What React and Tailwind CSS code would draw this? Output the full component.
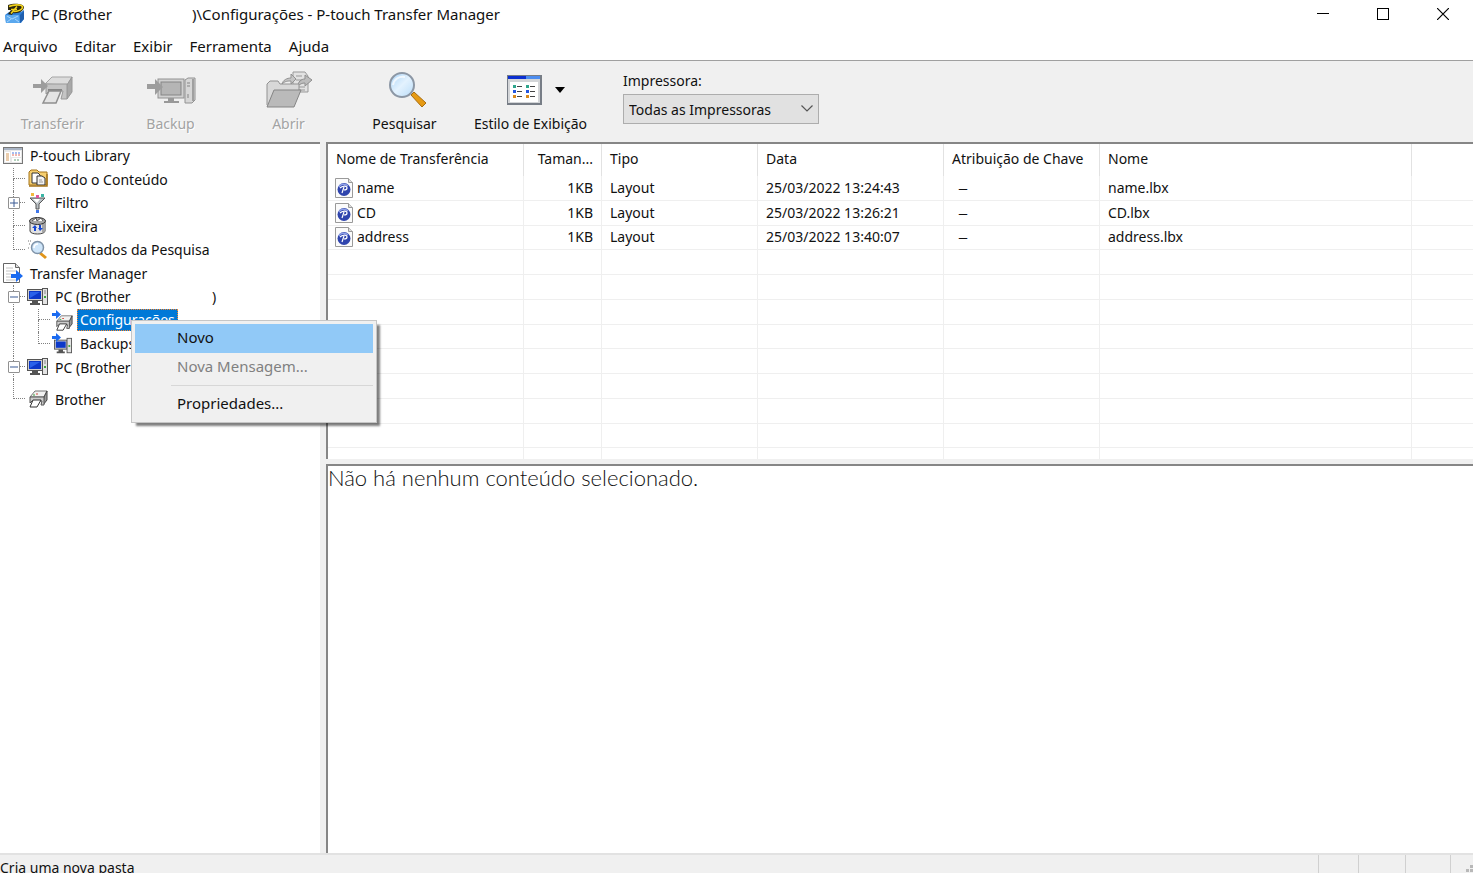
import React from 'react';

/* ---------- Icons ---------- */

function AppIcon() {
  return (
    <svg width="22" height="22" viewBox="0 0 22 22" aria-hidden="true">
      <path d="M1 12 5 9h12l3-2v9l-3 4H2z" fill="#2f7fd6" />
      <path d="M1 12h14l1 8H2z" fill="#5aa8ee" />
      <path d="m3 13 5 3 6-3M3 19l4-3M15 19l-4-3" stroke="#a8d4fb" fill="none" />
      <path d="M16 12l4-4v8l-4 4z" fill="#1f5fae" />
      <path d="M4 2C9 0 19 0 20 4c0 4-6 7-11 6l-1 2-4-1 3-4H4z" fill="#2b2710" />
      <path d="M5 3.500C9 1.500 18 1 18.500 4c0 3-5 4.500-9 4.500" fill="none" stroke="#f3d21b" strokeWidth="1.600" />
      <path d="m13 3.500-6 7M7 6.500h6" stroke="#f3d21b" strokeWidth="1.600" />
    </svg>
  );
}

function TransferIcon() {
  return (
    <svg width="42" height="32" viewBox="0 0 42 32" aria-hidden="true">
      <path d="M13 10 20 3h20l-5 8z" fill="#dcdcdc" stroke="#a5a5a5" />
      <path d="M35 11l5-8v15l-5 7z" fill="#a8a8a8" stroke="#989898" />
      <path d="M14 10h21v15h-6l2-8H17l-3 3z" fill="#c4c4c4" stroke="#999" />
      <path d="M16 16h14" stroke="#858585" strokeWidth="2" />
      <path d="M17 17h12l-5 12H11z" fill="#e4e4e4" stroke="#8f8f8f" strokeWidth="1.500" />
      <path d="M1 10h8V5l7 7-7 7v-5H1z" fill="#9d9d9d" />
    </svg>
  );
}

function BackupIcon() {
  return (
    <svg width="50" height="32" viewBox="0 0 50 32" aria-hidden="true">
      <rect x="12" y="5" width="26" height="19" fill="#d0d0d0" stroke="#929292" />
      <rect x="15" y="8" width="20" height="13" fill="#b5b5b5" stroke="#858585" />
      <path d="M22 24h6v3h5v2H18v-2h4z" fill="#999" />
      <path d="M39 6l3-2h7v22l-3 3h-7z" fill="#d6d6d6" stroke="#929292" />
      <path d="M47 5v22" stroke="#a0a0a0" strokeWidth="2" />
      <path d="M41 9h3M41 12h3M42 20v4" stroke="#858585" />
      <path d="M1 10h8V5l8 8-8 8v-6H1z" fill="#9d9d9d" />
    </svg>
  );
}

function OpenIcon() {
  return (
    <svg width="48" height="38" viewBox="0 0 48 38" aria-hidden="true">
      <path d="M28 1h12l3 4v16H28z" fill="#e2e2e2" stroke="#999" />
      <path d="M31 5h6M31 9h7M31 16h9M31 19h9" stroke="#999" />
      <path d="M40 4l7 5-7 6v-3c-3 0-5 1-7 3 0-4 3-7 7-7z" fill="#bcbcbc" stroke="#8f8f8f" />
      <path d="M2 34V13l3-3h8l2 3h19v7" fill="#d8d8d8" stroke="#929292" />
      <path d="M17 13c1-4 5-6 9-6V3l5 5-5 5v-3c-3 0-6 0-9 3z" fill="#c4c4c4" stroke="#929292" />
      <path d="M2 36 9 19h27l-7 17z" fill="#bababa" stroke="#858585" />
    </svg>
  );
}

function SearchIcon() {
  return (
    <svg width="40" height="38" viewBox="0 0 40 38" aria-hidden="true">
      <defs>
        <linearGradient id="lens" x1="0" y1="0" x2="1" y2="1">
          <stop offset="0" stopColor="#a9d3f7" />
          <stop offset=".5" stopColor="#e3f2fe" />
          <stop offset="1" stopColor="#b9dcf8" />
        </linearGradient>
      </defs>
      <path d="m26 21 12 11-4 4-11-12z" fill="#e69a13" stroke="#a86d10" />
      <circle cx="14" cy="14" r="12" fill="url(#lens)" stroke="#8c97a5" strokeWidth="2" />
      <path d="M5 14c1-6 6-9 12-8" stroke="#fff" strokeWidth="2" fill="none" opacity=".7" />
    </svg>
  );
}

function ViewStyleIcon() {
  const rows = [
    [13, '#2fa58c'],
    [18, '#2457e0'],
    [23, '#d98a1c'],
  ];
  return (
    <svg width="36" height="32" viewBox="0 0 36 32" aria-hidden="true">
      <rect x="0" y="1" width="35" height="30" fill="#777d86" />
      <rect x="1" y="2" width="32" height="27" fill="#d3d5d8" />
      <rect x="1" y="2" width="32" height="3" fill="#4c8df0" />
      <rect x="1" y="2" width="18" height="3" fill="#0b2fd0" />
      <rect x="3" y="8" width="28" height="20" fill="#fff" />
      {rows.map(([y, c]) => (
        <g key={y}>
          <rect x="6" y={y - 2} width="3" height="3" fill={c} />
          <rect x="10" y={y - 1} width="5" height="1" fill="#444" />
          <rect x="19" y={y - 2} width="3" height="3" fill={c} />
          <rect x="23" y={y - 1} width="5" height="1" fill="#444" />
        </g>
      ))}
    </svg>
  );
}

function LibraryIcon() {
  return (
    <svg width="20" height="18" viewBox="0 0 20 18" aria-hidden="true">
      <rect x=".5" y=".5" width="19" height="16" fill="#e8e8e8" stroke="#777" />
      <rect x="1" y="1" width="18" height="2" fill="#a9b4c4" />
      <rect x="2" y="5" width="5" height="10" fill="#fff" />
      <path d="M3 7h3M3 9h3M3 11h3M3 13h3" stroke="#d59a5a" />
      <rect x="8" y="4" width="10" height="6" fill="#fff" />
      <path d="M9 6h2M12 6h2M15 6h2" stroke="#4a78dd" />
      <path d="M9 8h2M12 8h2M15 8h2" stroke="#e06d5f" />
      <rect x="9" y="11" width="9" height="4" fill="#fff" />
      <path d="M11 13h6" stroke="#69a37b" strokeDasharray="2 1" />
    </svg>
  );
}

function ContentIcon() {
  return (
    <svg width="20" height="20" viewBox="0 0 20 20" aria-hidden="true">
      <path d="M1 16V3l2-2h6l2 2h8v13z" fill="#f6cf70" stroke="#a5741a" />
      <path d="M4 4h6l2 2v8H4z" fill="#fff" stroke="#333" />
      <path d="M9 7h5l3 2v7H9z" fill="#f3f3f3" stroke="#333" />
      <path d="M11 11h3M11 13h4" stroke="#999" />
      <path d="M1 17h18V5" fill="none" stroke="#a5741a" strokeWidth="1.500" />
    </svg>
  );
}

function FilterIcon() {
  return (
    <svg width="20" height="20" viewBox="0 0 20 20" aria-hidden="true">
      <path d="M2 5h15l-6 6v5H8v-5z" fill="#b9c0c5" stroke="#555" />
      <path d="M5 6h7l-3 4z" fill="#fff" />
      <rect x="3" y="0" width="3" height="3" fill="#f3b93e" />
      <rect x="8" y="2" width="3" height="3" fill="#e0559a" />
      <rect x="13" y="1" width="3" height="3" fill="#39b5a5" />
      <rect x="8" y="17" width="3" height="3" fill="#3e76ea" />
    </svg>
  );
}

function TrashIcon() {
  return (
    <svg width="20" height="20" viewBox="0 0 20 20" aria-hidden="true">
      <path d="M2 6v9c0 4 15 4 15 0V6z" fill="#e2e2e2" stroke="#444" />
      <path d="M14 7v10c2-1 3-1 3-2V6z" fill="#a5a5a5" />
      <ellipse cx="9.500" cy="5" rx="8" ry="3.500" fill="#a9a9a9" stroke="#333" />
      <path d="m4 5 4-3 1 3 4-3 2 3" fill="#fff" stroke="#555" />
      <path d="m4 12 3-3 2 3H8v3H6v-3zM15 12l-3 3-2-3h1V9h2v3z" fill="#1747d1" />
    </svg>
  );
}

function ResultsIcon() {
  return (
    <svg width="20" height="20" viewBox="0 0 20 20" aria-hidden="true">
      <path d="M0 1h3M1 4h2M0 8h2" stroke="#777" strokeDasharray="1 1" />
      <path d="m13 12 6 5-2 2-6-5z" fill="#e0951a" />
      <circle cx="9.500" cy="7.500" r="6" fill="#cfe6fa" stroke="#7f93a8" strokeWidth="1.500" />
      <path d="M6 8c0-3 2-4 4-4" stroke="#fff" fill="none" strokeWidth="1.500" />
    </svg>
  );
}

function ManagerIcon() {
  return (
    <svg width="20" height="20" viewBox="0 0 20 20" aria-hidden="true">
      <path d="M.5.5h12l4 4v15H.5z" fill="#fff" stroke="#666" />
      <path d="M12.500.5v4h4" fill="#ddd" stroke="#666" />
      <path d="M3 5h7M3 8h10M3 11h5M3 14h5M3 17h10" stroke="#c4c4c4" />
      <path d="M8 11h5V7l7 6-7 6v-4H8z" fill="#1b6bf0" />
    </svg>
  );
}

function PcIcon() {
  return (
    <svg width="21" height="18" viewBox="0 0 21 18" aria-hidden="true">
      <rect x=".5" y="1.500" width="15" height="11" fill="#cfcfcf" stroke="#555" />
      <rect x="2" y="3" width="12" height="8" fill="#0d39c9" />
      <path d="M3 10V4h10z" fill="#2a62ea" />
      <path d="M5 13h6v2h2v2H3v-2h2z" fill="#555" />
      <rect x="15.500" y=".5" width="5" height="16" fill="#e3e3e3" stroke="#555" />
      <path d="M18 8v2" stroke="#39a339" strokeWidth="2" />
      <path d="M17 3h2M17 5h2" stroke="#888" />
    </svg>
  );
}

function PrinterShape() {
  return (
    <g>
      <path d="M2 8 7 2h12l-3 6z" fill="#f1f1f1" stroke="#777" />
      <path d="M16 8l3-6v9l-4 5z" fill="#999" stroke="#444" />
      <path d="M2 8h14v8h-3l1-4H4l-2 2z" fill="#ccc" stroke="#555" />
      <path d="M5 11h8l-4 7H2z" fill="#fff" stroke="#333" />
      <path d="M5 6h2" stroke="#3a9f3a" />
      <path d="M8 5h2" stroke="#d04a3a" />
    </g>
  );
}

function PrinterIcon() {
  return (
    <svg width="20" height="20" viewBox="0 0 20 20" aria-hidden="true">
      <PrinterShape />
    </svg>
  );
}

function ConfigIcon() {
  return (
    <svg width="21" height="21" viewBox="0 0 21 21" aria-hidden="true">
      <g transform="translate(3 4) scale(.9)">
        <PrinterShape />
      </g>
      <path d="M0 3h4V0l5 4.500L4 9V6H0z" fill="#1b6bf0" />
    </svg>
  );
}

function BackupsIcon() {
  return (
    <svg width="21" height="21" viewBox="0 0 21 21" aria-hidden="true">
      <g transform="translate(2 4) scale(.9)">
        <rect x=".5" y="3.500" width="14" height="10" fill="#cfcfcf" stroke="#555" />
        <rect x="2" y="5" width="11" height="7" fill="#0d39c9" />
        <path d="M5 14h5v2h2v2H3v-2h2z" fill="#555" />
        <rect x="14.500" y="1.500" width="5" height="16" fill="#e3e3e3" stroke="#555" />
        <path d="M17 9v2" stroke="#39a339" strokeWidth="2" />
      </g>
      <path d="M0 3h4V0l5 4.500L4 9V6H0z" fill="#1b6bf0" />
    </svg>
  );
}

function FileIcon() {
  return (
    <svg width="18" height="20" viewBox="0 0 18 20" aria-hidden="true" className="shrink-0">
      <path d="M.5.5h13l4 4v15H.5z" fill="#fbfbfb" stroke="#9a9a9a" />
      <path d="M13.500.5v4h4" fill="#ddd" stroke="#9a9a9a" />
      <circle cx="9" cy="11.500" r="6.500" fill="#2f44ad" />
      <path d="M4 9c1-3 6-4 9-1" stroke="#8fa0e6" fill="none" strokeWidth="1.500" />
      <path d="M5 10c2-2 7-3 7 0 0 1-1 2-3 2M9 9l-2 6" stroke="#fff" strokeWidth="1.200" fill="none" />
    </svg>
  );
}

/* ---------- Window chrome ---------- */

function TitleBar() {
  return (
    <header className="flex h-7 shrink-0 items-center bg-white pl-1 text-[15px]">
      <AppIcon />
      <h1 className="ml-[5px] flex whitespace-pre">
        <span className="w-[161px]">PC (Brother</span>
        <span>)\Configurações - P-touch Transfer Manager</span>
      </h1>
      <div className="ml-auto flex">
        <button aria-label="Minimizar" className="flex h-7 w-[60px] items-center justify-center">
          <svg width="12" height="12" viewBox="0 0 12 12"><path d="M0 5.500h12" stroke="#000" /></svg>
        </button>
        <button aria-label="Maximizar" className="flex h-7 w-[60px] items-center justify-center">
          <svg width="12" height="12" viewBox="0 0 12 12"><rect x=".5" y=".5" width="11" height="11" fill="none" stroke="#000" /></svg>
        </button>
        <button aria-label="Fechar" className="flex h-7 w-[60px] items-center justify-center">
          <svg width="12" height="12" viewBox="0 0 12 12"><path d="m0 0 12 12M12 0 0 12" stroke="#000" strokeWidth="1.200" /></svg>
        </button>
      </div>
    </header>
  );
}

function MenuBar() {
  return (
    <nav className="flex h-8 shrink-0 items-center gap-[17px] bg-white pl-[3px] pt-1 text-[15px]">
      {['Arquivo', 'Editar', 'Exibir', 'Ferramenta', 'Ajuda'].map((m) => (
        <button key={m}>{m}</button>
      ))}
    </nav>
  );
}

function ToolButton({ icon, label, disabled, className }) {
  return (
    <button
      disabled={disabled}
      className={`flex flex-col items-center disabled:text-[#a3a3a3] disabled:[text-shadow:1px_1px_0_#fff] ${className}`}
    >
      <span className="flex h-[42px] items-center">{icon}</span>
      <span className="leading-[26px]">{label}</span>
    </button>
  );
}

function Toolbar() {
  return (
    <div className="flex h-[82px] shrink-0 items-start border-t border-[#a0a0a0] bg-[#f0f0f0] pt-2">
      <ToolButton icon={<TransferIcon />} label="Transferir" disabled className="w-[105px]" />
      <ToolButton icon={<BackupIcon />} label="Backup" disabled className="ml-[13px] w-[105px]" />
      <ToolButton icon={<OpenIcon />} label="Abrir" disabled className="ml-[13px] w-[105px]" />
      <ToolButton icon={<span className="pl-[6px]"><SearchIcon /></span>} label="Pesquisar" className="ml-[11px] w-[105px]" />
      <ToolButton
        className="ml-[11px] w-[125px]"
        label="Estilo de Exibição"
        icon={
          <span className="flex items-center gap-3 pl-[10px]">
            <ViewStyleIcon />
            <svg width="10" height="6" viewBox="0 0 10 6"><path d="M0 0h10L5 6z" fill="#000" /></svg>
          </span>
        }
      />
      <div className="relative ml-[30px] flex flex-col">
        <label htmlFor="printer" className="mb-[1px] leading-6">Impressora:</label>
        <select
          id="printer"
          className="h-[30px] w-[196px] appearance-none border border-[#adadad] bg-[#e1e1e1] pl-[5px] pr-7"
        >
          <option>Todas as Impressoras</option>
        </select>
        <svg className="pointer-events-none absolute bottom-3 right-[6px]" width="12" height="7" viewBox="0 0 12 7" aria-hidden="true">
          <path d="m.5.5 5.500 5.500L11.500.5" fill="none" stroke="#555" strokeWidth="1.200" />
        </svg>
      </div>
    </div>
  );
}

/* ---------- Tree ---------- */

function Branch({ kind, expander }) {
  return (
    <span className="relative flex h-full w-[25px] shrink-0 flex-col pl-[13px]">
      <span className="h-1/2 border-b border-l border-dotted border-[#808080]" />
      <span className={`h-1/2 ${kind === 'tee' ? 'border-l border-dotted border-[#808080]' : ''}`} />
      {expander && (
        <button
          aria-label={expander === 'plus' ? 'Expandir' : 'Recolher'}
          className="absolute left-2 top-1/2 flex h-3 w-3 -translate-y-1/2 items-center justify-center rounded-[1px] border border-[#919191] bg-white"
        >
          <svg width="8" height="8" viewBox="0 0 8 8">
            <path d={expander === 'plus' ? 'M0 4h8M4 0v8' : 'M0 4h8'} stroke="#3b5a94" />
          </svg>
        </button>
      )}
    </span>
  );
}

function Pass() {
  return (
    <span className="flex h-full w-[25px] shrink-0 pl-[13px]">
      <span className="h-full border-l border-dotted border-[#808080]" />
    </span>
  );
}

function TreeRow({ branches, icon, children }) {
  return (
    <li className="flex min-h-0 items-center whitespace-pre">
      {branches}
      <span className="flex w-[25px] shrink-0 items-center justify-center">{icon}</span>
      <span className="pl-[5px]">{children}</span>
    </li>
  );
}

function ContextMenu() {
  return (
    <div
      role="menu"
      className="absolute left-[131px] top-[176px] z-10 w-[246px] border border-[#c6c6c6] bg-[#f0f0f0] p-[3px] text-[15px] leading-[26px] shadow-[4px_4px_2px_-1px_rgba(0,0,0,0.5)]"
    >
      <button role="menuitem" className="flex h-[29px] w-full items-start bg-[#91c9f7] pl-[42px]">Novo</button>
      <button role="menuitem" disabled className="flex h-[29px] w-full items-start pl-[42px] text-[#808080]">Nova Mensagem...</button>
      <hr className="mb-1 ml-9 mt-[3px] border-[#d7d7d7]" />
      <button role="menuitem" className="flex h-[29px] w-full items-start pl-[42px]">Propriedades...</button>
    </div>
  );
}

function TreePanel() {
  return (
    <aside className="relative w-80 shrink-0 border-t-2 border-[#868686] bg-white">
      <ul className="grid h-[235px] grid-rows-10">
        <TreeRow icon={<LibraryIcon />}>P-touch Library</TreeRow>
        <TreeRow branches={<Branch kind="tee" />} icon={<ContentIcon />}>Todo o Conteúdo</TreeRow>
        <TreeRow branches={<Branch kind="tee" expander="plus" />} icon={<FilterIcon />}>Filtro</TreeRow>
        <TreeRow branches={<Branch kind="tee" />} icon={<TrashIcon />}>Lixeira</TreeRow>
        <TreeRow branches={<Branch kind="elbow" />} icon={<ResultsIcon />}>Resultados da Pesquisa</TreeRow>
        <TreeRow icon={<ManagerIcon />}>Transfer Manager</TreeRow>
        <TreeRow branches={<Branch kind="tee" expander="minus" />} icon={<PcIcon />}>
          <span className="inline-block w-[157px]">PC (Brother</span>)
        </TreeRow>
        <TreeRow branches={<><Pass /><Branch kind="tee" /></>} icon={<ConfigIcon />}>
          <span className="-ml-[3px] block bg-[#0078d7] px-[3px] leading-[22px] text-white outline-1 -outline-offset-1 outline-dotted outline-[#ff8728]">Configurações</span>
        </TreeRow>
        <TreeRow branches={<><Pass /><Branch kind="elbow" /></>} icon={<BackupsIcon />}>Backups</TreeRow>
        <TreeRow branches={<Branch kind="tee" expander="minus" />} icon={<PcIcon />}>PC (Brother</TreeRow>
      </ul>
      <ul className="grid h-10">
        <TreeRow branches={<Branch kind="elbow" />} icon={<PrinterIcon />}>Brother</TreeRow>
      </ul>
      <ContextMenu />
    </aside>
  );
}

/* ---------- File list ---------- */

const FILES = [
  { name: 'name', date: '25/03/2022 13:24:43', file: 'name.lbx' },
  { name: 'CD', date: '25/03/2022 13:26:21', file: 'CD.lbx' },
  { name: 'address', date: '25/03/2022 13:40:07', file: 'address.lbx' },
];

const HEAD = 'border-r border-[#e2e2e2] px-2 pb-[3px] font-normal';
const CELL = 'border-b border-r border-[#efefef] p-0 px-2 leading-5';

function FileList() {
  return (
    <section className="h-[317px] shrink-0 overflow-hidden border-l-2 border-t-2 border-[#868686] bg-white">
      <table className="h-[329px] w-full table-fixed border-separate border-spacing-0 whitespace-nowrap text-left">
        <colgroup>
          <col className="w-[196px]" />
          <col className="w-[78px]" />
          <col className="w-[156px]" />
          <col className="w-[186px]" />
          <col className="w-[156px]" />
          <col className="w-[312px]" />
          <col />
        </colgroup>
        <thead>
          <tr className="h-8">
            <th className={HEAD}>Nome de Transferência</th>
            <th className={`${HEAD} text-right`}>Taman...</th>
            <th className={HEAD}>Tipo</th>
            <th className={HEAD}>Data</th>
            <th className={HEAD}>Atribuição de Chave</th>
            <th className={HEAD}>Nome</th>
            <th className="p-0" />
          </tr>
        </thead>
        <tbody>
          {FILES.map((f) => (
            <tr key={f.name} className="h-6">
              <td className={CELL}>
                <span className="-ml-[1px] flex items-center gap-[4px]">
                  <FileIcon />
                  {f.name}
                </span>
              </td>
              <td className={`${CELL} text-right`}>1KB</td>
              <td className={CELL}>Layout</td>
              <td className={CELL}>{f.date}</td>
              <td className={`${CELL} pl-[14px] text-[20px] font-light`}>–</td>
              <td className={CELL}>{f.file}</td>
              <td className="border-b border-[#efefef] p-0" />
            </tr>
          ))}
          {Array.from({ length: 9 }, (_, i) => (
            <tr key={i} className="h-6">
              {Array.from({ length: 6 }, (_, j) => (
                <td key={j} className={CELL} />
              ))}
              <td className="border-b border-[#efefef] p-0" />
            </tr>
          ))}
        </tbody>
      </table>
    </section>
  );
}

function StatusBar() {
  return (
    <footer className="flex h-[18px] shrink-0 overflow-hidden bg-[#f0f0f0]">
      <span className="flex-1 pt-[2px] leading-[22px]">Cria uma nova pasta</span>
      <span className="w-10 border-l border-[#d0d0d0]" />
      <span className="w-[47px] border-l border-[#d0d0d0]" />
      <span className="w-[45px] border-l border-[#d0d0d0]" />
      <span className="flex w-[23px] items-end justify-end border-l border-[#d0d0d0]">
        <svg width="7" height="8" viewBox="0 0 7 8" aria-hidden="true">
          <path d="M4 0h3v3H4zM0 4h3v3H0zM4 4h3v3H4z" fill="#b8b8b8" />
        </svg>
      </span>
    </footer>
  );
}

export default function App() {
  return (
    <div className="flex h-screen flex-col overflow-hidden bg-[#f0f0f0] font-['Noto_Sans',sans-serif] text-[14px] text-[#111]">
      <TitleBar />
      <MenuBar />
      <Toolbar />
      <main className="flex min-h-0 flex-1 gap-[6px] border-b-2 border-[#e2e2e2]">
        <TreePanel />
        <div className="flex min-w-0 flex-1 flex-col gap-[5px]">
          <FileList />
          <section className="flex-1 border-l-2 border-t-2 border-[#868686] bg-white">
            <p className="font-['Lato',sans-serif] text-[22px] font-light leading-6">Não há nenhum conteúdo selecionado.</p>
          </section>
        </div>
      </main>
      <StatusBar />
    </div>
  );
}
